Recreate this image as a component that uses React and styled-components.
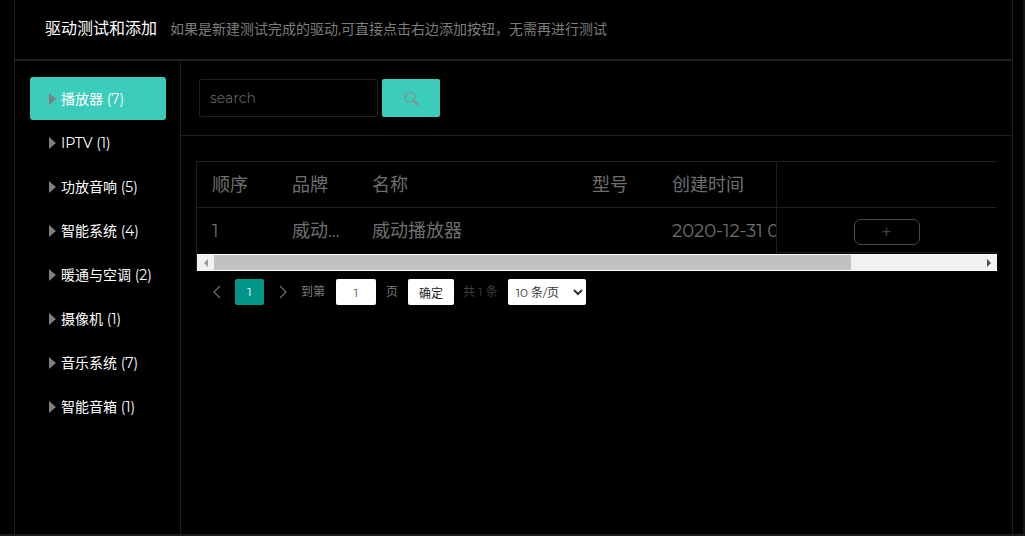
import React from 'react';
import styled, { createGlobalStyle } from 'styled-components';

const sans = `Montserrat, Inter, "Noto Sans CJK SC", sans-serif`;

const GlobalStyle = createGlobalStyle`
  html, body {
    margin: 0;
    height: 100%;
    overflow: hidden;
    background: #000;
    font-family: ${sans};
  }
  * {
    box-sizing: border-box;
  }
`;

const Page = styled.div`
  width: 1025px;
  height: 536px;
  padding: 0 10px 0 14px;
  background: #000;
  border-bottom: 2px solid #1c1c1c;
  border-right: 2px solid #161616;
`;

const Panel = styled.div`
  height: 100%;
  display: flex;
  flex-direction: column;
  border-left: 1px solid #1f1f1f;
  border-right: 1px solid #1f1f1f;
`;

const Header = styled.header`
  height: 61px;
  flex-shrink: 0;
  display: flex;
  align-items: center;
  padding: 0 0 2px 30px;
  border-bottom: 2px solid #1f1f1f;
  line-height: 20px;
`;

const Title = styled.h1`
  margin: 0;
  font-size: 16px;
  font-weight: 400;
  color: #fff;
`;

const Hint = styled.span`
  margin-left: 13px;
  font-size: 14px;
  color: #7d7d7d;
`;

const Body = styled.div`
  flex: 1;
  display: flex;
  min-height: 0;
`;

const Sidebar = styled.nav`
  width: 166px;
  flex-shrink: 0;
  padding: 16px 14px 0 15px;
  border-right: 1px solid #1f1f1f;
`;

const NavItem = styled.div`
  height: 43px;
  margin-bottom: 1px;
  display: flex;
  align-items: center;
  gap: 5px;
  padding-left: 19px;
  border-radius: 3px;
  font-size: 14px;
  line-height: 20px;
  color: #fff;
  background: ${(p) => (p.$active ? '#3bccbb' : 'transparent')};
`;

const Arrow = styled.i`
  width: 0;
  height: 0;
  border-style: solid;
  border-width: 6px 0 6px 7px;
  border-color: transparent transparent transparent #7f7f7f;
`;

const Content = styled.main`
  flex: 1;
  min-width: 0;
`;

const SearchBar = styled.div`
  height: 75px;
  display: flex;
  gap: 4px;
  padding: 18px 0 0 18px;
  border-bottom: 1px solid #1f1f1f;
`;

const SearchInput = styled.input`
  width: 179px;
  height: 38px;
  padding: 0 10px;
  background: #000;
  border: 1px solid #1f1f1f;
  border-radius: 2px;
  outline: none;
  font-family: ${sans};
  font-size: 14px;
  &::placeholder {
    color: #5e5e5e;
    opacity: 1;
  }
`;

const SearchButton = styled.button`
  width: 58px;
  height: 38px;
  padding: 0;
  display: flex;
  align-items: center;
  justify-content: center;
  background: #3bccbb;
  border: 0;
  border-radius: 2px;
`;

const TableWrap = styled.div`
  position: relative;
  width: 801px;
  margin: 25px 0 0 15px;
  border-top: 1px solid #1f1f1f;
  border-left: 1px solid #1f1f1f;
  overflow: hidden;
`;

const Grid = styled.div`
  display: grid;
  grid-template-columns: 80px 80px 220px 80px 340px;
  width: 800px;
`;

const Cell = styled.div`
  height: 46px;
  padding-left: 15px;
  display: flex;
  align-items: center;
  white-space: nowrap;
  overflow: hidden;
  font-size: 18px;
  line-height: 22px;
  color: #6f6f6f;
  border-bottom: 1px solid ${(p) => (p.$last ? 'transparent' : '#1f1f1f')};
`;

const FixedColumn = styled.div`
  position: absolute;
  top: 0;
  right: 0;
  width: 221px;
  height: 91px;
  background: #000;
  border-left: 1px solid #1f1f1f;
`;

const FixedHead = styled.div`
  height: 46px;
  border-bottom: 1px solid #1f1f1f;
`;

const FixedCell = styled.div`
  height: 45px;
  display: flex;
  align-items: center;
  justify-content: center;
  padding: 4px 1px 0 0;
  border-bottom: 1px solid #1f1f1f;
`;

const AddButton = styled.button`
  width: 66px;
  height: 26px;
  padding: 0;
  background: transparent;
  border: 1px solid #4a4a4a;
  border-radius: 7px;
  font-family: "Liberation Sans", sans-serif;
  font-size: 16px;
  line-height: 24px;
  color: #444;
`;

const ScrollBar = styled.div`
  height: 17px;
  display: flex;
  background: #f1f1f1;
  border-top: 1px solid #fff;
  border-bottom: 1px solid #fff;
`;

const ScrollEnd = styled.span`
  width: 17px;
  flex-shrink: 0;
  display: flex;
  align-items: center;
  justify-content: center;
`;

const ScrollTrack = styled.div`
  flex: 1;
`;

const ScrollThumb = styled.div`
  width: 637px;
  height: 100%;
  background: #c1c1c1;
`;

const ScrollArrow = styled.i`
  width: 0;
  height: 0;
  border-style: solid;
  border-width: 4px 0 4px 4px;
  border-color: transparent transparent transparent #505050;
  transform: ${(p) => (p.$left ? 'rotate(180deg)' : 'none')};
  opacity: ${(p) => (p.$left ? 0.55 : 1)};
`;

const Pager = styled.div`
  display: flex;
  align-items: center;
  height: 26px;
  margin: 8px 0 0 31px;
  font-size: 12px;
  line-height: 16px;
  color: #7d7d7d;
`;

const PageNav = styled.span`
  display: flex;
  width: 10px;
  justify-content: center;
  margin: ${(p) => p.$margin};
`;

const PageCurrent = styled.span`
  width: 29px;
  height: 26px;
  display: flex;
  align-items: center;
  justify-content: center;
  background: #009688;
  border-radius: 2px;
  color: #fff;
`;

const PageInput = styled.input`
  width: 40px;
  height: 26px;
  margin: 0 10px 0 11px;
  padding: 0;
  text-align: center;
  background: #fff;
  border: 0;
  border-radius: 2px;
  font-family: ${sans};
  font-size: 12px;
  color: #555;
`;

const ConfirmButton = styled.button`
  width: 46px;
  height: 26px;
  margin: 0 9px 0 10px;
  padding: 0;
  background: #fff;
  border: 0;
  border-radius: 2px;
  font-family: ${sans};
  font-size: 12px;
  color: #222;
`;

const Total = styled.span`
  color: #3f3f3f;
`;

const SizeSelect = styled.select`
  width: 78px;
  height: 26px;
  margin-left: 10px;
  padding: 0 0 0 4px;
  background: #fff;
  border: 0;
  border-radius: 2px;
  font-family: ${sans};
  font-size: 12px;
  color: #333;
`;

const categories = [
  ['播放器', 7],
  ['IPTV', 1],
  ['功放音响', 5],
  ['智能系统', 4],
  ['暖通与空调', 2],
  ['摄像机', 1],
  ['音乐系统', 7],
  ['智能音箱', 1],
];

const Chevron = ({ flip }) => (
  <svg width="8" height="14" viewBox="0 0 8 14" fill="none" stroke="#6f6f6f" strokeWidth="1.2">
    <path d={flip ? 'M1 1 7 7 1 13' : 'M7 1 1 7 7 13'} />
  </svg>
);

const App = () => (
  <Page>
    <GlobalStyle />
    <Panel>
      <Header>
        <Title>驱动测试和添加</Title>
        <Hint>如果是新建测试完成的驱动,可直接点击右边添加按钮，无需再进行测试</Hint>
      </Header>
      <Body>
        <Sidebar>
          {categories.map(([name, count], i) => (
            <NavItem key={name} $active={i === 0}>
              <Arrow />
              <span>
                {name} ({count})
              </span>
            </NavItem>
          ))}
        </Sidebar>
        <Content>
          <SearchBar>
            <SearchInput placeholder="search" />
            <SearchButton>
              <svg width="15" height="15" viewBox="0 0 15 15" fill="none" stroke="#8a8a8a">
                <circle cx="6" cy="6" r="5" strokeWidth="1.1" />
                <path d="M3 6a3 3 0 0 1 2.4-2.9" strokeWidth="0.8" />
                <path d="M9.7 9.7 13.8 13.8" strokeWidth="2" />
              </svg>
            </SearchButton>
          </SearchBar>
          <TableWrap>
            <Grid>
              <Cell>顺序</Cell>
              <Cell>品牌</Cell>
              <Cell>名称</Cell>
              <Cell>型号</Cell>
              <Cell>创建时间</Cell>
              <Cell $last>1</Cell>
              <Cell $last>威动...</Cell>
              <Cell $last>威动播放器</Cell>
              <Cell $last />
              <Cell $last>2020-12-31 09:30:12</Cell>
            </Grid>
            <FixedColumn>
              <FixedHead />
              <FixedCell>
                <AddButton>+</AddButton>
              </FixedCell>
            </FixedColumn>
            <ScrollBar>
              <ScrollEnd>
                <ScrollArrow $left />
              </ScrollEnd>
              <ScrollTrack>
                <ScrollThumb />
              </ScrollTrack>
              <ScrollEnd>
                <ScrollArrow />
              </ScrollEnd>
            </ScrollBar>
          </TableWrap>
          <Pager>
            <PageNav $margin="0 13px 0 0">
              <Chevron />
            </PageNav>
            <PageCurrent>1</PageCurrent>
            <PageNav $margin="0 13px 0 14px">
              <Chevron flip />
            </PageNav>
            <span>到第</span>
            <PageInput defaultValue="1" />
            <span>页</span>
            <ConfirmButton>确定</ConfirmButton>
            <Total>共 1 条</Total>
            <SizeSelect defaultValue="10">
              <option value="10">10 条/页</option>
            </SizeSelect>
          </Pager>
        </Content>
      </Body>
    </Panel>
  </Page>
);

export default App;
